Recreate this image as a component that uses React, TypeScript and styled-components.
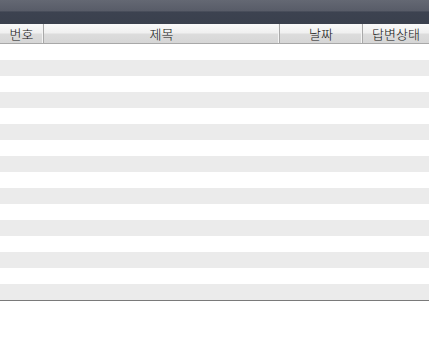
import React from "react";
import styled, { createGlobalStyle } from "styled-components";

const Global = createGlobalStyle`
  html, body { margin: 0; padding: 0; background: #fff; }
  body { font-family: "Noto Sans CJK KR", "Noto Sans", sans-serif; }
`;

const Page = styled.div`
  width: 429px;
  height: 337px;
  background: #fff;
`;

const TopBar = styled.div`
  height: 24px;
  background: linear-gradient(to bottom, #646873 0%, #585c68 45%, #3c4250 50%, #3a404d 100%);
`;

const Table = styled.div`
  display: grid;
  grid-template-columns: 44px 236px 83px 1fr;
  border-bottom: 1px solid #7a7a7a;
`;

const HeadCell = styled.div<{ $last?: boolean }>`
  height: 19px;
  display: flex;
  align-items: center;
  justify-content: center;
  font-size: 13px;
  font-weight: 300;
  color: #111;
  background: linear-gradient(to bottom, #fafafa 0%, #f0f0f0 45%, #dcdcdc 55%, #d6d6d6 100%);
  border-bottom: 1px solid #a8a8a8;
  border-right: ${(p) => (p.$last ? "none" : "1px solid #a9a9a9")};
  box-shadow: ${(p) => (p.$last ? "none" : "inset -1px 0 0 #f4f4f4")};
  box-sizing: content-box;
  line-height: 1;
`;

const Row = styled.div<{ $alt: boolean }>`
  grid-column: 1 / -1;
  height: 16px;
  background: ${(p) => (p.$alt ? "#ebebeb" : "#ffffff")};
`;

const heads = ["번호", "제목", "날짜", "답변상태"];

export default function App() {
  return (
    <Page>
      <Global />
      <TopBar />
      <Table>
        {heads.map((h, i) => (
          <HeadCell key={h} $last={i === heads.length - 1}>
            {h}
          </HeadCell>
        ))}
        {Array.from({ length: 16 }, (_, i) => (
          <Row key={i} $alt={i % 2 === 1} />
        ))}
      </Table>
    </Page>
  );
}
